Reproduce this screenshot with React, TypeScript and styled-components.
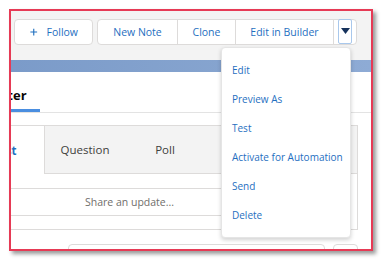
import { createGlobalStyle, styled } from 'styled-components';

const GlobalStyle = createGlobalStyle`
  html, body {
    margin: 0;
    padding: 0;
    background: #ffffff;
    font-family: "Open Sans", "Noto Sans", Arial, sans-serif;
  }
`;

const Page = styled.div`
  padding: 9px;
  width: 383px;
  height: 261px;
  box-sizing: border-box;
`;

const Frame = styled.div`
  position: relative;
  width: 364px;
  height: 242px;
  box-sizing: border-box;
  border: 2px solid #e63a55;
  box-shadow: 3px 3px 4px rgba(0, 0, 0, 0.4);
  overflow: hidden;
  background: #ffffff;
`;

const Header = styled.div`
  height: 49px;
  box-sizing: border-box;
  padding: 8px 0 0 3px;
  background: #f3f3f3;
  display: flex;
  gap: 4px;
`;

const Button = styled.button`
  height: 26px;
  box-sizing: border-box;
  border: 1px solid #dddbda;
  border-radius: 4px;
  background: #ffffff;
  color: #1f6fbf;
  font-family: inherit;
  font-size: 10.5px;
  display: flex;
  align-items: center;
  padding: 0 14px 0 15px;
  gap: 9px;
  cursor: pointer;
`;

const Group = styled.div`
  display: flex;
  height: 26px;
  box-sizing: border-box;
  border: 1px solid #dddbda;
  border-radius: 4px;
  background: #ffffff;
`;

const GroupButton = styled.button<{ $w: number }>`
  width: ${(p) => p.$w}px;
  height: 100%;
  border: none;
  border-left: 1px solid #dddbda;
  background: transparent;
  color: #1f6fbf;
  font-family: inherit;
  font-size: 10.5px;
  padding: 0;
  display: flex;
  align-items: center;
  justify-content: center;
  &:first-child {
    border-left: none;
  }
`;

const FocusRing = styled.span`
  width: 14px;
  height: 25px;
  box-sizing: border-box;
  border: 1px solid #a9c8ec;
  border-radius: 2px;
  display: flex;
  align-items: center;
  justify-content: center;
  margin-top: -2px;
`;

const Banner = styled.div`
  height: 12px;
  background: linear-gradient(90deg, #7b9bc9 0%, #86a4cf 60%, #8eabd5 100%);
`;

const TabBar = styled.div`
  height: 41px;
  box-sizing: border-box;
  border-bottom: 1px solid #e3e3e3;
  display: flex;
`;

const Tab = styled.div`
  margin-left: -34px;
  padding: 9px 13px 0 0;
  display: flex;
  align-items: center;
  font-size: 13px;
  font-weight: 700;
  color: #080707;
  border-bottom: 3px solid #4a8ee0;
`;

const Card = styled.div`
  margin: 12px 13px 0 -60px;
  height: 105px;
  box-sizing: border-box;
  border: 1px solid #dddbda;
  display: flex;
  flex-direction: column;
`;

const PubTabs = styled.div`
  display: flex;
  height: 48px;
`;

const PubTab = styled.div<{ $active?: boolean }>`
  flex: 0 0 80px;
  display: flex;
  align-items: center;
  justify-content: center;
  font-size: 11.5px;
  font-weight: ${(p) => (p.$active ? 700 : 400)};
  color: ${(p) => (p.$active ? '#1f6fbf' : '#3e3e3c')};
`;

const PubRest = styled.div`
  flex: 1;
  display: flex;
  background: #f3f3f3;
  border-left: 1px solid #dddbda;
  border-bottom: 1px solid #dddbda;
  padding-left: -2px;
`;

const PostTab = styled(PubTab)`
  margin-left: 12px;
`;

const ShareBox = styled.div`
  margin: 14px 12px 0 0;
  height: 28px;
  box-sizing: border-box;
  border-top: 1px solid #dddbda;
  border-bottom: 1px solid #dddbda;
  display: flex;
  align-items: center;
  padding-left: 133px;
  font-size: 10.5px;
  color: #706e6b;
`;

const Bottom = styled.div`
  display: flex;
  gap: 8px;
  margin-top: 14px;
  padding-left: 57px;
`;

const Field = styled.div<{ $w: number }>`
  width: ${(p) => p.$w}px;
  height: 20px;
  box-sizing: border-box;
  border: 1px solid #dddbda;
  border-radius: 4px;
  background: #ffffff;
`;

const Menu = styled.ul`
  position: absolute;
  left: 210px;
  top: 36px;
  width: 130px;
  margin: 0;
  padding: 7px 0 8px;
  box-sizing: border-box;
  list-style: none;
  background: #ffffff;
  border: 1px solid #e5e5e5;
  border-radius: 4px;
  box-shadow: 0 2px 4px rgba(0, 0, 0, 0.18);
`;

const MenuItem = styled.li`
  height: 29px;
  display: flex;
  align-items: center;
  padding-left: 10px;
  font-size: 10px;
  color: #1f6fbf;
  white-space: nowrap;
`;

const menuItems = ['Edit', 'Preview As', 'Test', 'Activate for Automation', 'Send', 'Delete'];

function App() {
  return (
    <>
      <GlobalStyle />
      <Page>
        <Frame>
          <Header>
            <Button style={{ width: 79 }}>
              <svg width="10" height="10" viewBox="0 0 10 10">
                <path d="M5 0.5v9M0.5 5h9" stroke="#1f6fbf" strokeWidth="1.5" />
              </svg>
              Follow
            </Button>
            <Group>
              <GroupButton $w={79}>New Note</GroupButton>
              <GroupButton $w={58}>Clone</GroupButton>
              <GroupButton $w={98}>Edit in Builder</GroupButton>
              <GroupButton $w={23}>
                <FocusRing>
                  <svg width="9" height="6" viewBox="0 0 9 6">
                    <path d="M0 0h9L4.5 6z" fill="#16325c" />
                  </svg>
                </FocusRing>
              </GroupButton>
            </Group>
          </Header>
          <Banner />
          <TabBar>
            <Tab>Chatter</Tab>
          </TabBar>
          <Card>
            <PubTabs>
              <PostTab $active>Post</PostTab>
              <PubRest>
                <PubTab>Question</PubTab>
                <PubTab>Poll</PubTab>
              </PubRest>
            </PubTabs>
            <ShareBox>Share an update...</ShareBox>
          </Card>
          <Bottom>
            <Field $w={257} />
            <Field $w={25} />
          </Bottom>
          <Menu>
            {menuItems.map((m) => (
              <MenuItem key={m}>{m}</MenuItem>
            ))}
          </Menu>
        </Frame>
      </Page>
    </>
  );
}

export default App;
